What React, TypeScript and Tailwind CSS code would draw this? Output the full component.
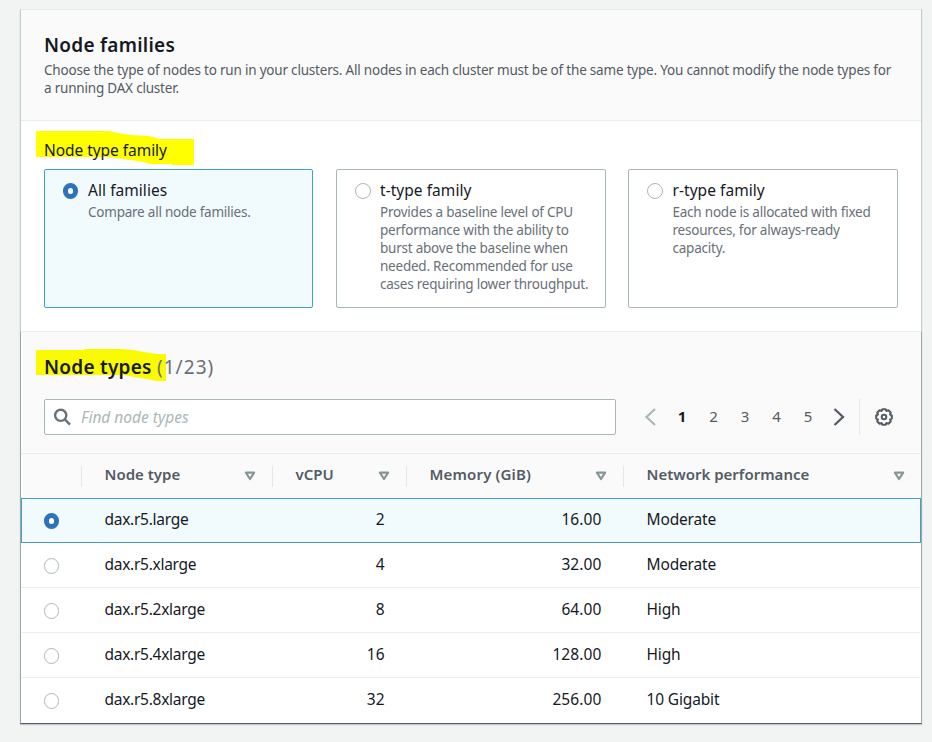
import React from "react";

const families = [
  {
    name: "All families",
    selected: true,
    lines: ["Compare all node families."],
  },
  {
    name: "t-type family",
    selected: false,
    lines: [
      "Provides a baseline level of CPU",
      "performance with the ability to",
      "burst above the baseline when",
      "needed. Recommended for use",
      "cases requiring lower throughput.",
    ],
  },
  {
    name: "r-type family",
    selected: false,
    lines: ["Each node is allocated with fixed", "resources, for always-ready", "capacity."],
  },
];

const rows = [
  { type: "dax.r5.large", cpu: "2", memory: "16.00", network: "Moderate", selected: true },
  { type: "dax.r5.xlarge", cpu: "4", memory: "32.00", network: "Moderate", selected: false },
  { type: "dax.r5.2xlarge", cpu: "8", memory: "64.00", network: "High", selected: false },
  { type: "dax.r5.4xlarge", cpu: "16", memory: "128.00", network: "High", selected: false },
  { type: "dax.r5.8xlarge", cpu: "32", memory: "256.00", network: "10 Gigabit", selected: false },
];

function Radio({ selected, className }: { selected: boolean; className: string }) {
  return selected ? (
    <span className={`block h-4 shrink-0 rounded-full border-[5px] border-[#2e73b8] bg-white ${className}`} />
  ) : (
    <span className={`block h-4 shrink-0 rounded-full border border-[#aab7b8] bg-white ${className}`} />
  );
}

function SortIcon() {
  return (
    <svg className="block h-[10px] w-3 shrink-0" viewBox="0 0 12 10" fill="none" stroke="#879596" strokeWidth="2.2">
      <path d="M1.9 1.6h8.2L6 8z" strokeLinejoin="round" />
    </svg>
  );
}

function HeaderCell({ label, className }: { label: string; className: string }) {
  return (
    <div className={`flex h-[21px] items-center justify-between border-l border-[#e3e7e7] pr-4 ${className}`}>
      <span className="pb-1 text-[15px] leading-[21px] font-semibold whitespace-nowrap text-[#545b64]">{label}</span>
      <SortIcon />
    </div>
  );
}

export default function App() {
  return (
    <div className="h-[742px] w-[932px] overflow-hidden bg-[#f2f3f3] pt-[9px] pl-5 font-['Noto_Sans','Open_Sans',sans-serif] text-[#16191f]">
      <main className="flex h-[715px] w-[902px] flex-col shadow-[0_1px_1px_0_rgba(0,28,36,0.2)]">
        <section className="flex h-[322px] flex-col border-t border-r border-l border-t-[#e5e8e8] border-r-[#c5cbcd] border-l-[#c5cbcd] bg-white">
          <header className="h-[111px] border-b border-[#eaeded] bg-[#fafafa] pt-[23px] pl-[23px] whitespace-nowrap">
            <h1 className="h-6 text-[19px] leading-6 font-semibold tracking-[0.25px]">Node families</h1>
            <p className="mt-1 text-[13.5px] leading-[18px] tracking-[-0.202px] text-[#545b64]">
              Choose the type of nodes to run in your clusters. All nodes in each cluster must be of the same type. You cannot modify the node types for
              <br />a running DAX cluster.
            </p>
          </header>
          <div className="px-[23px] pt-[18px]">
            <div className="relative h-[30px] text-[15.5px] leading-[22px] tracking-[-0.05px] whitespace-nowrap">
              <svg className="absolute top-[-8px] left-[-8px] h-[36px] w-[158px]" viewBox="0 0 158 36">
                <path d="M0 0H73L82 2L95 4L113 5L124 8H158V34H136V33H114L108 31L94 29L79 27L72 26H0Z" fill="#ff0" />
              </svg>
              <span className="relative">Node type family</span>
            </div>
            <div className="flex h-[139px] justify-between">
              {families.map((family) => (
                <article
                  key={family.name}
                  className={`flex rounded-[2px] border pt-[13px] pl-[18px] whitespace-nowrap ${
                    family.selected ? "w-[269px] border-[#44a0c2] bg-[#f1fafd]" : "w-[270px] border-[#aab7b8] bg-white"
                  }`}
                >
                  <Radio selected={family.selected} className={family.selected ? "w-[15px]" : "w-4"} />
                  <div className={family.selected ? "-mt-1 ml-[10px]" : "-mt-1 ml-[9.5px]"}>
                    <h3 className="text-[15.5px] leading-[22px] tracking-[0.05px]">{family.name}</h3>
                    <div className="mt-[2px]">
                      {family.lines.map((line) => (
                        <p key={line} className="text-[13.5px] leading-[18px] tracking-[-0.23px] text-[#687078]">
                          {line}
                        </p>
                      ))}
                    </div>
                  </div>
                </article>
              ))}
            </div>
          </div>
        </section>

        <section className="flex h-[393px] flex-col border border-t-[#eaeded] border-r-[#9ba7b0] border-b-[#545b64] border-l-[#9ba7b0] bg-white">
          <header className="h-[122px] border-b border-[#eaeded] bg-[#fafafa] px-[23px] pt-[23px]">
            <h2 className="relative h-6 text-[19px] leading-6 font-semibold tracking-[0.25px] whitespace-nowrap">
              <svg className="absolute top-[-6px] left-[-8px] h-[33px] w-[130px]" viewBox="0 0 130 33">
                <path d="M0 1H48V0H86L97 1L108 3L121 5H130V32H121L111 30L98 28L88 26H0Z" fill="#fbfb00" />
              </svg>
              <span className="relative">
                Node types <span className="font-normal tracking-[1.05px] text-[#687078]">(1/23)</span>
              </span>
            </h2>
            <div className="mt-5 flex h-9 items-center">
              <div className="flex h-9 w-[572px] items-center rounded-[2px] border border-[#aab7b8] bg-white pl-[8px]">
                <svg className="size-[18px]" viewBox="0 0 18 18" fill="none" stroke="#687078" strokeWidth="2.4">
                  <circle cx="7.7" cy="7.3" r="5.6" />
                  <path d="M11.8 11.4L17 16.6" />
                </svg>
                <span className="ml-[10px] text-[15.5px] leading-[22px] whitespace-nowrap text-[#aab7b8] italic">Find node types</span>
              </div>
              <nav className="ml-[28px] flex h-9 items-center text-[15px] leading-[22px] text-[#545b64]">
                <svg className="h-[18px] w-[12px]" viewBox="0 0 12 18" fill="none" stroke="#aab7b8" strokeWidth="2.2">
                  <path d="M11 1L2.5 9L11 17" />
                </svg>
                <span className="ml-[10px] w-8 pb-[2px] text-center font-bold text-[#16191f]">1</span>
                <span className="w-[31px] pb-[2px] text-center">2</span>
                <span className="w-8 pb-[2px] text-center">3</span>
                <span className="w-[31px] pb-[2px] text-center">4</span>
                <span className="w-8 pb-[2px] text-center">5</span>
                <svg className="ml-[9px] h-[18px] w-[12px]" viewBox="0 0 12 18" fill="none" stroke="#545b64" strokeWidth="2.3">
                  <path d="M1.5 1L10 9L1.5 17" />
                </svg>
              </nav>
              <span className="ml-[14px] h-9 w-px bg-[#e3e7e7]" />
              <svg className="ml-[15px] size-[18px]" viewBox="0 0 18 18" fill="none" stroke="#545b64">
                <circle cx="9" cy="9" r="2.3" strokeWidth="2" />
                <path
                  d="M7.4 1.2H10.6L11.4 2.9L13.4 2.3L15.7 4.6L15.1 6.6L16.8 7.4V10.6L15.1 11.4L15.7 13.4L13.4 15.7L11.4 15.1L10.6 16.8H7.4L6.6 15.1L4.6 15.7L2.3 13.4L2.9 11.4L1.2 10.6V7.4L2.9 6.6L2.3 4.6L4.6 2.3L6.6 2.9Z"
                  strokeWidth="2.1"
                  strokeLinejoin="round"
                />
              </svg>
            </div>
          </header>

          <div className="flex h-[44px] items-center bg-[#fafafa] pl-[60px]">
            <HeaderCell label="Node type" className="w-[191px] pl-[22.5px]" />
            <HeaderCell label="vCPU" className="w-[134px] pl-[22.5px]" />
            <HeaderCell label="Memory (GiB)" className="w-[217px] pl-[22.5px] tracking-[0.15px]" />
            <HeaderCell label="Network performance" className="w-[298px] pl-[22.5px]" />
          </div>

          {rows.map((row) => (
            <div
              key={row.type}
              className={`flex h-[45px] items-center border text-[15.5px] leading-[22px] whitespace-nowrap ${
                row.selected
                  ? "border-[#44a0c2] bg-[#f1fafd]"
                  : "border-transparent border-b-[#eaeded] last:border-b-transparent"
              } pl-[22px]`}
            >
              <Radio selected={row.selected} className="w-[15px]" />
              <span className="ml-[45.5px] w-[152px] pb-1 tracking-[-0.28px]">{row.type}</span>
              <span className="w-[128px] pb-1 text-right">{row.cpu}</span>
              <span className="w-[217px] pb-1 text-right tracking-[0.1px]">{row.memory}</span>
              <span className="ml-[45px] pb-1 tracking-[-0.15px]">{row.network}</span>
            </div>
          ))}
        </section>
      </main>
    </div>
  );
}
